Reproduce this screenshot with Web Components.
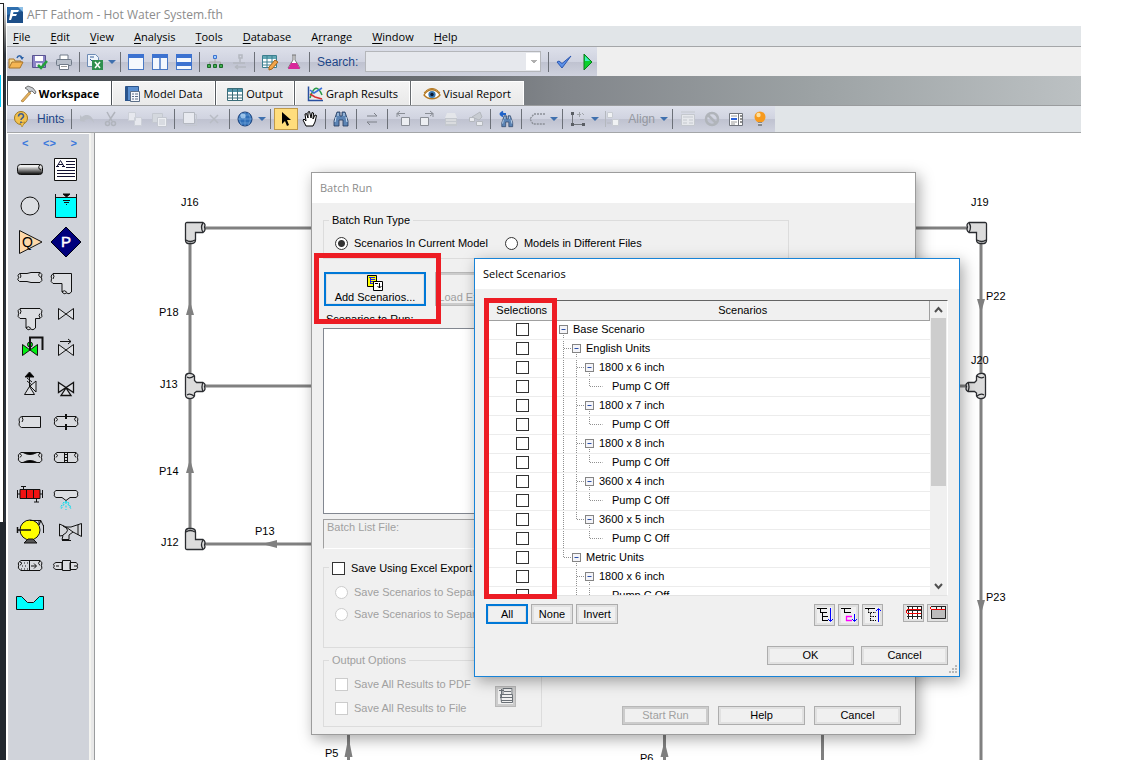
<!DOCTYPE html>
<html lang="en">
<head>
<meta charset="utf-8">
<title>AFT Fathom - Hot Water System.fth</title>
<style>
html, body { margin: 0; height: 100%; background: #fff; overflow: hidden; }
body { font: 11px/13px "Liberation Sans", Arial, sans-serif; color: #000; }
</style>
</head>
<body>
<app-shell></app-shell>
<script>
function define(name, css, html, setup) {
  const t = document.createElement('template');
  t.innerHTML = '<style>*{box-sizing:border-box}' + css + '</style>' + html;
  customElements.define(name, class extends HTMLElement {
    constructor() {
      super();
      this.attachShadow({ mode: 'open' }).append(t.content.cloneNode(true));
    }
    connectedCallback() {
      if (setup && !this.ready) { this.ready = true; setup(this, this.shadowRoot); }
    }
  });
}

/* ---------- 16px toolbar icons ---------- */
const win = '<rect x=".5" y=".5" width="15" height="15" fill="#f4f8fd" stroke="#4a79c4"/><path d="M0 0h16v4H0z" fill="#3c72d0"/>';
const binoc = c => `<path d="M4 1h3v4h2V1h3l3 9v5h-5V9H6v6H1v-5z" fill="${c}" stroke="#23395a" stroke-width=".8"/><path d="M3 6l-1 5M13 6l1 5M5 2v3M11 2v3" stroke="#cfe3f7" fill="none"/>`;
const ICONS = {
  logo: '<path d="M0 0h16v16H0z" fill="#2f6fae"/><path d="M0 8l16-4v12H0z" fill="#1c4e88"/><path d="M11 0h5v5z" fill="#8fc0e6"/><path d="M4 3h8l-1 2H6.500L6 7h4l-1 2H5.500L4 13H2z" fill="#fff"/>',
  open: '<path d="M1 14V5h5l1 2h6v2" fill="#f9d98a" stroke="#a8742a"/><path d="M1 14l3-6h11l-3 6z" fill="#f5b552" stroke="#a8742a"/><path d="M9 4c1-3 4-3 5 0" fill="none" stroke="#2d62a8" stroke-width="1.500"/><path d="M12 3h4l-2 3z" fill="#2d62a8"/>',
  save: '<path d="M.5 1.500h13v12H.5z" fill="#8b84c6" stroke="#5a5492"/><path d="M3 2h8v5H3z" fill="#fff"/><path d="M4 9h6v4H4z" fill="#e4e4f2"/><path d="M6 11l3 3 6-7" fill="none" stroke="#23a03a" stroke-width="2.500"/>',
  print: '<path d="M4 1h8v5H4z" fill="#fff" stroke="#707a88"/><rect x=".5" y="5.500" width="15" height="6" rx="1" fill="#b9c0cb" stroke="#707a88"/><path d="M3.500 10.500h9v5h-9z" fill="#fff" stroke="#707a88"/><path d="M5 12.500h6" stroke="#999"/>',
  excel: '<path d="M.5.500h8l3 3v9H.5z" fill="#eef4fb" stroke="#6d8bb5"/><path d="M3 3h4M3 5l3 3" stroke="#335a96" fill="none"/><path d="M5 6h11v10H5z" fill="#2f8f4e"/><path d="M8 8l5 6M13 8l-5 6" stroke="#fff" stroke-width="1.500"/>',
  win1: win, win2: win + '<path d="M8 3v13" stroke="#4a79c4" stroke-width="1.500"/>',
  win3: win + '<path d="M0 8h16v4H0z" fill="#3c72d0"/>',
  tree: '<path d="M8 4v4M2.500 11V8h11v3M8 8v3" fill="none" stroke="#aaa"/><path d="M6.500 1.500h3v3h-3z" fill="#9fd0ff" stroke="#3c72d0"/><path d="M.5 10.500h3v3h-3zM6.500 10.500h3v3h-3zM12.500 10.500h3v3h-3z" fill="#3fae4e" stroke="#1d6b2b"/>',
  treeoff: '<path d="M8 1h3v3H8zM9 4v4M2 9h12M4 13h11M4 13l3-2M4 13l3 2" fill="none" stroke="#b4b8c0" stroke-width="1.500"/>',
  gridpen: '<path d="M.5 1.500h14v12H.5z" fill="#fff" stroke="#3b7f8f"/><path d="M1 2h13v3H1z" fill="#63a8b5"/><path d="M1 8h13M1 11h13M5 2v11M10 2v11" stroke="#3b7f8f"/><path d="M7 13l6-7 3 2-6 7-3 1z" fill="#f3a64a" stroke="#a8651c"/>',
  flask: '<path d="M6 1h4M7 1v5l-5 8h12L9 6V1" fill="#fff" stroke="#777"/><path d="M5 9h6l3 6H2z" fill="#d8289a"/>',
  check: '<path d="M1 8l5 6L15 2 6 9.500 3 7z" fill="#5b90e8" stroke="#2c57b0"/>',
  play: '<path d="M4 0l8 8-8 8z" fill="#0ad02c" stroke="#0a7d1c"/><path d="M5 2l5 5H5z" fill="#3df0c0"/>',
  hammer: '<path d="M9 6l-8 9 2 1 8-9z" fill="#e6b25c" stroke="#a4762e" stroke-width=".7"/><path d="M5 2l3-2 5 2 3 4-1 2-3-3-3 1-1-2z" fill="#c8ccd0" stroke="#555" stroke-width=".8"/>',
  book: '<path d="M1.500.500h13v14h-13z" fill="#5a8fd0" stroke="#2a548c"/><path d="M1 1h3v14H1z" fill="#2a548c"/><path d="M6.500 5.500h9v10h-9z" fill="#f4f6fa" stroke="#5c6f88"/><path d="M8 8h2M11 8h3M8 10.500h2M11 10.500h3M8 13h2M11 13h3" stroke="#5c6f88"/>',
  sheet: '<path d="M.5 2.500h15v12H.5z" fill="#fff" stroke="#3b6c78"/><path d="M1 3h14v3H1z" fill="#4f93a8"/><path d="M1 9h14M1 12h14M5.500 3v11M10.500 3v11" stroke="#3b6c78"/>',
  graph: '<path d="M1.500.500v14H16" fill="none" stroke="#2850a0" stroke-width="1.500"/><path d="M3 12c4-13 8-12 12-3" fill="none" stroke="#2a9a48" stroke-width="1.500"/><path d="M3 4l4 3 8-5" fill="none" stroke="#3a70d8" stroke-width="1.500"/><path d="M3 8l5 3 7 2" fill="none" stroke="#d83030" stroke-width="1.500"/>',
  eye: '<path d="M0 9c4-7 12-7 16 0-4 5-12 5-16 0z" fill="#fff" stroke="#b47820" stroke-width="1.300"/><path d="M0 7c4-6 12-6 16 0" fill="none" stroke="#b47820"/><circle cx="8" cy="8.500" r="3.600" fill="#3a78b0"/><circle cx="8" cy="8.500" r="1.700" fill="#0a1830"/>',
  hint: '<circle cx="8" cy="7" r="6.500" fill="#f3c24e" stroke="#a07820"/><path d="M7 12l2 4 3-5z" fill="#f3c24e" stroke="#a07820" stroke-width=".6"/><path d="M5.500 5.500c0-4 5.500-3.500 5 0-.5 1.800-2.500 1.500-2.500 3.500M8 10.500v1.500" fill="none" stroke="#3c5c92" stroke-width="1.600"/>',
  undo: '<path d="M1 10V4l2 2c4-4 11-2 12 6-3-5-7-5-10-2l2 1z" fill="#bcc0c8"/>',
  cut: '<path d="M4 1l5 9M12 1L6 10" stroke="#b0b4bc" stroke-width="1.500"/><circle cx="4.500" cy="12.500" r="2" fill="none" stroke="#b0b4bc" stroke-width="1.500"/><circle cx="10.500" cy="12.500" r="2" fill="none" stroke="#b0b4bc" stroke-width="1.500"/>',
  copy: '<path d="M1.500 1.500h7v8h-7zM7.500 6.500h7v8h-7z" fill="#e6e8ee" stroke="#ccd0d8"/>',
  paste: '<path d="M1.500 2.500h10v9h-10z" fill="#d4d8de" stroke="#c4c8d0"/><path d="M6.500 6.500h9v9h-9z" fill="#eceef2" stroke="#c4c8d0"/><path d="M8 9h6M8 11h6M8 13h6" stroke="#c4c8d0"/>',
  box: '<path d="M3.500 3.500h11v11h-11z" fill="none" stroke="#c4c8d0"/><path d="M1.500 1.500h11v11h-11z" fill="#e8eaf0" stroke="#b4b8c0"/>',
  cross: '<path d="M4 4l8 8M12 4l-8 8" stroke="#b8bcc4" stroke-width="1.500"/>',
  globe: '<circle cx="8" cy="8" r="7" fill="#2f6fb8" stroke="#1a3f78"/><path d="M1 8h14M8 1v14M3 4h10M3 12h10M5 2c-3 4-3 8 0 12M11 2c3 4 3 8 0 12" fill="none" stroke="#7cacdc" stroke-width=".6"/><circle cx="6" cy="5" r="2.500" fill="#bfe0fa" opacity=".7"/>',
  arrow: '<path d="M4 1v12l3-3 2 5 2-1-2-5h4z" fill="#000"/>',
  hand: '<path d="M4 15l-3-6 1-1 2 2-1-7 1.500-.5L6 7V1l1.500-.5L9 7l1-5.500 1.500.5-.5 6 2-4 1.500.500L13 11l-2 4z" fill="#fff" stroke="#000"/>',
  binoc: binoc('#5c84b4'),
  swap: '<path d="M3 5h10l-3-3M13 11H3l3 3" fill="none" stroke="#7c8088"/>',
  rotl: '<path d="M6.500 6.500h8v8h-8z" fill="#eceef2" stroke="#8a8e96"/><path d="M10 2.500H2M2 2.500l3-2.500M2 2.500l3 2.500M2 2v4" fill="none" stroke="#8a8e96"/>',
  rotr: '<path d="M1.500 6.500h8v8h-8z" fill="#eceef2" stroke="#8a8e96"/><path d="M6 2.500h8M14 2.500L11 0M14 2.500L11 5M14 2v4" fill="none" stroke="#8a8e96"/>',
  db: '<path d="M2 7h12v8H2z" fill="#c4c8ce"/><path d="M4 2h8l2 5H2z" fill="#e4e6ea"/><path d="M3 9h10M3 12h10" stroke="#eee"/>',
  route: '<path d="M2.500 6.500h5v4h-5zM9.500 10.500h6v4h-6z" fill="#e8eaee" stroke="#b4b8be"/><path d="M5 6l8-5 2 5-3 3z" fill="#c8ccd2" stroke="#b4b8be"/>',
  findback: '<g transform="translate(3 4) scale(.78)">' + binoc('#5c84b4') + '</g><path d="M8 3H2M2 3l3-2.500M2 3l3 2.500" stroke="#1f62c8" stroke-width="1.800" fill="none"/>',
  lasso: '<path d="M16 3H5l-4 5 3 5h12" fill="none" stroke="#8a8e96" stroke-width="1.300" stroke-dasharray="2 1"/>',
  nodes: '<path d="M2.500 2v11.500H14" fill="none" stroke="#74787e"/><path d="M1 1h3v3H1zM1 12h3v3H1zM12 12h3v3h-3z" fill="#5a5e64"/><path d="M7 3.500h4M9.500 1v5M12 2l2 2M10 8.500h4" stroke="#a0a4aa"/>',
  align: '<path d="M1.500 0v16" stroke="#b4b8be"/><path d="M3.500 1.500h5v5h-5zM8.500 8.500h6v6h-6z" fill="#f0f2f4" stroke="#c8ccd2"/><path d="M3 12h4" stroke="#b4b8be"/>',
  panel: '<path d="M1.500 3.500h13v11h-13z" fill="#e6e8ec" stroke="#c4c8ce"/><path d="M3 6h10M3 9h4M9 9h4M3 12h4M9 12h4M1 1h14" stroke="#c4c8ce"/>',
  noentry: '<circle cx="8" cy="8" r="6" fill="none" stroke="#b0b4ba" stroke-width="2.500"/><path d="M4 4l8 8" stroke="#b0b4ba" stroke-width="2.500"/>',
  list: '<path d="M1.500 2.500h13v12h-13z" fill="#fff" stroke="#70747c"/><path d="M10.500 3v11" stroke="#70747c"/><path d="M3 5h6M3 11h6M3 13h4" stroke="#999"/><path d="M3 8h6" stroke="#2c62d8" stroke-width="2"/><path d="M12 5h2M12 8h2M12 11h2" stroke="#222"/>',
  bulb: '<circle cx="8" cy="6" r="5.500" fill="#f79a1e"/><circle cx="6.500" cy="4" r="2.200" fill="#fde0a0"/><path d="M6 11h4v4H6z" fill="#888"/><path d="M6 12.500h4" stroke="#ddd"/>',
  scen: '<path d="M.5.500h9v11h-9z" fill="#ff0" stroke="#000"/><path d="M2 2.500h6M4 4.500h4M4 6.500h4M4 8.500h4M3.500 2v7" stroke="#22d" fill="none"/><path d="M6.500 6.500h9v9h-9z" fill="#fff" stroke="#000"/><path d="M12.500 8v5M10.500 11l2 2 2-2M8 8.500h3" stroke="#000" fill="none"/>',
  printer: '<path d="M5 .500h9v6H5zM1 2.500h5M3.500 1v9M2.500 6.500h12v8h-11zM2 9.500h12M3 12.500h11M6 3.500h7" fill="none" stroke="#6a7076"/>',
  exp1: '<path d="M0 1.500h10M3.500 2v4M3 5.500h7M5.500 6v8M5 9.500h6M5 13.500h6" fill="none" stroke="#000"/><path d="M13.500 1v13M11 12l2.500 2.500L16 12" fill="none" stroke="#00f"/>',
  exp2: '<path d="M0 1.500h10M3.500 2v4M3 5.500h7" fill="none" stroke="#000"/><path d="M5 9.500h6M5 13.500h6M5.500 9v5" fill="none" stroke="#f0f" stroke-width="1.300"/><path d="M13.500 7v7M11 12l2.500 2.500L16 12" fill="none" stroke="#00f"/>',
  exp3: '<path d="M0 1.500h10" stroke="#000"/><path d="M3.500 2v3M3 5.500h8M5.500 6v8M5 9.500h6M5 13.500h6" fill="none" stroke="#000" stroke-dasharray="1.500 1"/><path d="M13.500 15V2M11 4l2.500-2.500L16 4" fill="none" stroke="#00f"/>',
  gridall: '<path d="M2 2h13v12H2z" fill="#fff"/><path d="M1 1.500h15M1 5.500h15M1 8.500h15M1 11.500h15M2.500 1v13M6.500 1v13M11.500 1v13M15.500 1v13" stroke="#222" fill="none"/><path d="M1 4.500h14M1 8.500h14M.5 5v3" stroke="#e00"/>',
  gridtop: '<path d="M1.500 4.500h14v9h-14z" fill="#bcbcbc" stroke="#222"/><path d="M1 1.500h15M6.500 1v4M11.500 1v4M15.500 1v4" stroke="#222"/><path d="M1 4.500h14M.5 2v2" stroke="#e00"/>'
};
define('ui-icon', ':host{display:inline-flex;flex:none;width:16px;height:16px}svg{width:16px;height:16px;overflow:visible}',
  '<svg viewBox="0 0 16 16" aria-hidden="true"></svg>',
  (el, r) => { r.querySelector('svg').innerHTML = ICONS[el.getAttribute('name')]; });

define('tool-button', `:host{display:flex;flex:none}
button{all:unset;display:flex;align-items:center;justify-content:center;width:16px;height:20px}
:host([active]){margin:0 -4px}
:host([active]) button{width:22px;border:1px solid #c09a4a;background:#ffdd7c}`,
  '<button type="button"><ui-icon></ui-icon></button>',
  (el, r) => {
    const i = document.createElement('ui-icon'); i.setAttribute('name', el.getAttribute('name'));
    r.querySelector('ui-icon').replaceWith(i);
    r.querySelector('button').setAttribute('aria-label', el.getAttribute('name'));
  });
define('tool-sep', ':host{display:block;flex:none;width:1px;height:20px;margin:0 -1px;background:#6c7078}', '');
define('tool-caret', ':host{display:block;flex:none;margin:0 -3px;border:4px solid transparent;border-top-color:#3f70ae;border-bottom:0}', '');
define('tool-strip', `:host{display:flex;align-items:center;align-self:flex-start;gap:8px;padding:0 1px;height:29px;color:#1c4587;
font:11px/16px "Liberation Sans",sans-serif;background:linear-gradient(#dde0ea,#d0d3e0 50%,#bfc2d0 52%,#cfd2de)}`, '<slot></slot>');
define('search-box', `:host{display:flex;align-items:center;gap:7px}
label{display:block;font-size:12px}select{appearance:none;width:176px;height:21px;border:1px solid #b4b6ba;border-radius:0;margin:0;
background:linear-gradient(#b0b0b0,#b0b0b0) no-repeat 165px 8px/6px 1px,linear-gradient(#b0b0b0,#b0b0b0) no-repeat 166px 9px/4px 1px,linear-gradient(#b0b0b0,#b0b0b0) no-repeat 167px 10px/2px 1px,linear-gradient(#fff,#fff) no-repeat 160px 1px/14px 17px,#e6e8ed}`,
  '<label for="q">Search:</label><select id="q"></select>');

define('menu-bar', `:host{display:flex;gap:20px;padding:0 6px;height:21px;background:#e1e5e8;border-bottom:1px solid #a4a6a8}
a{font:11px/21px "Open Sans",sans-serif;color:#000;text-decoration:none}u{text-underline-offset:2px}`,
  ['<u>F</u>ile', '<u>E</u>dit', '<u>V</u>iew', '<u>A</u>nalysis', '<u>T</u>ools', '<u>D</u>atabase', 'A<u>r</u>range', '<u>W</u>indow', '<u>H</u>elp']
    .map(m => `<a href="#">${m}</a>`).join(''));

define('title-bar', ':host{display:flex;align-items:center;gap:4px;height:26px;padding-top:3px;color:#8c8c8c;font:12px/16px "Open Sans",sans-serif}',
  '<ui-icon name="logo"></ui-icon><slot></slot>');

define('tab-item', `:host{display:block;flex:none;height:24px}
button{all:unset;display:flex;align-items:center;justify-content:center;gap:3px;width:100%;height:100%;background:linear-gradient(#f4f4f4,#e9e9e9);
border:1px solid #fff;border-bottom:0;box-sizing:border-box;font:11px/16px "Open Sans",sans-serif;white-space:nowrap}
:host([selected]) button{background:#fff;font-weight:700}`, '<button type="button" role="tab"><slot></slot></button>');
define('tab-strip', `:host{display:flex;align-items:flex-end;gap:1px;height:30px;padding-left:1px;border-bottom:1px solid #9a9c9e;
background:linear-gradient(90deg,#43484e,#6a6e72 40%,#82868b 52%,#9ca2a4 75%,#bcc1c3)}
.a{width:103px}.b{width:103px}.c{width:78px}.d{width:115px}.e{width:113px}`,
  `<tab-item class="a" selected><ui-icon name="hammer"></ui-icon>Workspace</tab-item><tab-item class="b"><ui-icon name="book"></ui-icon>Model Data</tab-item><tab-item class="c"><ui-icon name="sheet"></ui-icon>Output</tab-item><tab-item class="d"><ui-icon name="graph"></ui-icon>Graph Results</tab-item><tab-item class="e"><ui-icon name="eye"></ui-icon>Visual Report</tab-item>`);

/* ---------- 36px palette symbols ---------- */
const tube = (x1, x2, y1 = 12.5, y2 = 22.5) => { const m = (y1 + y2) / 2;
  return `<path d="M${x1 + 3} ${y1}H${x2 - 2}Q${x2 + 1} ${y1 + 2} ${x2 - .5} ${m}Q${x2 + 1} ${y2 - 2} ${x2 - 2} ${y2}H${x1 + 3}Q${x1 - 1} ${y2 - 2} ${x1 + .5} ${m}Q${x1 - 1} ${y1 + 2} ${x1 + 3} ${y1}z" fill="#d8dade"/><path d="M${x1 + 2} ${y1 + 1}q3 2 0 4M${x2 - 2} ${y1}q-3 3 0 5" fill="none"/>`; };
const bow = '<path d="M10.500 12.500v11l15-11v11z"';
const PAL = [
  '<defs><linearGradient id="g" x2="0" y2="1"><stop offset=".2" stop-color="#eee"/><stop offset=".9" stop-color="#222"/></linearGradient></defs><rect x="5.500" y="12.500" width="25" height="10" rx="3" fill="url(#g)"/><path d="M28 12.500q-3 4 1 5.500" fill="none"/>',
  '<path d="M6.500 6.500h22v22h-22z" fill="#fff"/><g stroke="#113"><path d="M18 9.500h9M18 12.500h9M18 15.500h9M9 18.500h18M9 21.500h18M9 24.500h18"/><path d="M9 14.500l3.500-6 3.500 6M8 14.500h3M14 14.500h3M10 12.500h5" fill="none"/></g>',
  '<circle cx="18" cy="18" r="9" fill="#dcdee2"/>',
  '<path d="M7.500 9.500h21v20h-21z" fill="#0ff"/><path d="M7.500 6v4M28.500 6v4M15 12.500h7M16 14.500h5M18 16.500h1" fill="none"/><path d="M15 6h7l-3.500 3z" fill="#000"/>',
  '<path d="M7.500 6.500v23L30 18z" fill="#ffd8a8"/><text x="10" y="23" font-size="14" fill="#000" stroke="none">Q</text>',
  '<path d="M18 3l15 15-15 15L3 18z" fill="#00007c" stroke="#001"/><text x="13" y="23" font-size="15" fill="#fff" stroke="#fff" stroke-width=".5">P</text>',
  '<path d="M7.500 13.500H15L19 12.500H28Q31 14 29.500 17.500Q31 21 28 22.500H19L15 21.500H7.500Q4.500 20 6.500 17.500Q5 15 7.500 13.500z" fill="#dcdee2"/><path d="M8 14q2 2 0 4M28 12.500q-3 3 1 5" fill="none"/>',
  '<path d="M5 13.500H23.500V32Q21 35 18.500 33Q16 35 14 32V23.500H5Q2 22 3.500 18.500Q2 16 5 13.500z" fill="#dcdee2"/><path d="M5 14q2 2 0 5M14 31.500q3-2 5 1" fill="none"/>',
  '<path d="M8 12.500H28Q31 14 29.500 17.500Q31 21 28 22.500H23.500V32Q21 35 18.500 33Q16 35 14 32V22.500H8Q5 21 6.500 17.500Q5 14 8 12.500z" fill="#dcdee2"/><path d="M8 13q2 2 0 5M28 22q-2-3 0-4.500M14 31.500q3-2 5 1" fill="none"/>',
  bow + ' fill="#dcdee2"/>',
  bow + ' fill="#0e1"/><circle cx="18" cy="12.500" r="2.500" fill="#0e1"/><path d="M18 18V5.500h12.500V18" fill="none" stroke-width="2"/>',
  bow + ' fill="#dcdee2"/><path d="M12 9.500h11M20 7l3 2.500-3 2.500" fill="none"/>',
  '<path d="M12.500 26.500l5-8 5 8zM18 18l6-5v11z" fill="#dcdee2"/><path d="M17.500 19V6M15 13l5 4M15 10l5 4" fill="none"/><path d="M13 9l4.500-5L22 9z" fill="#000"/>',
  '<path d="M10.500 14.500v10l15-10v10zM18 20l-5 7.500h10z" fill="#dcdee2" stroke-width="1.300"/>',
  '<path d="M9.500 12.500H28.500V23.500H9.500Q6 22 7.500 18Q6 14 9.500 12.500z" fill="#dcdee2"/><path d="M10 13q2 3 0 5" fill="none"/>',
  tube(6, 30) + '<path d="M18 10v5M18 20v6" stroke-width="2"/>',
  tube(6, 30) + '<path d="M11 12.500q7 4 14 0zM11 22.500q7-4 14 0z" fill="#000"/>',
  tube(6, 30) + '<path d="M16.500 12v11M19.500 12v11M17 14.500h3M17 17.500h3M17 20.500h3" fill="none"/>',
  '<path d="M8 13.500h20v9H8z" fill="#f11212"/><path d="M14.500 14v9M21.500 14v9M5.500 14v8M30.500 14v8M6 18h2M28 18h2M11.500 10v3M9 10.500h5M24.500 23v3M22 26h5" fill="none"/>',
  '<path d="M8 14.500H28Q31 16 29.500 18Q31 20 28 21.500H22L18 24.500 14 21.500H8Q5 20 6.500 18Q5 16 8 14.500z" fill="#dcdee2"/><path d="M18 25l-5 8M18 25l5 8M18 26v8M16 26l-4 6M20 26l3 6" stroke="#0de" stroke-dasharray="2 1.500"/>',
  '<circle cx="18" cy="18" r="10" fill="#ff0"/><path d="M12 31h13l-4-4h-5z" fill="#555"/><path d="M5.500 15v6M6 18h13" stroke-width="1.500"/><path d="M18 8.500h11L27 13V9M31.500 13v8M29 9l2.500 5" fill="none"/>',
  '<path d="M11.500 12L18 15H23L33.500 11.500V24.500L25 20 21 23V27.500H14L15 23.500 11.500 24z" fill="#d4d6da"/><path d="M14 28.500h9M30 13v10M15 14q9 4 0 9M18 15l7 5" fill="none"/>',
  tube(6, 30) + '<path d="M17.500 12v11M19 18h5M22 15.500l2.500 2.500-2.500 2.500M9 15h1M12 15h1M15 15h1M10 18h1M13 18h1M9 21h1M12 21h1M15 21h1" fill="none"/>',
  '<path d="M8 14.500h6v7H8Q4 20 6.500 18Q4 16 8 14.500zM22 14.500h6Q31 16 29 18Q31 20 28 21.500h-6zM14.500 12.500h8v10h-8z" fill="#dcdee2"/><path d="M8 18h3M26 18h3" fill="none"/>',
  '<path d="M4.500 12.500h5l6 6h6l6-6h4v13h-27z" fill="#0ff"/>'
];
define('pipe-palette', `:host{display:block;flex:none;width:84px;background:#d0d3da;border-left:1px solid #fff;border-top:1px solid #fff;border-right:2px solid #f4f4f0}
nav{display:flex;justify-content:space-between;padding:0 12px 0 14px;height:18px;font:bold 11px/18px "Liberation Sans",sans-serif;color:#3a78dc}
div{display:grid;grid-template-columns:36px 36px;grid-auto-rows:36px;padding-left:4px}
button{all:unset;width:36px;height:36px}svg{display:block;width:36px;height:36px}text{font-family:"Liberation Sans",sans-serif}`,
  '<nav><span>&lt;</span><span>&lt;&gt;</span><span>&gt;</span></nav><div>' + PAL.map(p => `<button type="button"><svg viewBox="0 0 36 36" stroke="#111" stroke-width="1">${p}</svg></button>`).join('') + '</div>');

/* ---------- pipe network ---------- */
const elbow = '<path d="M2 .500H18Q21 2 19.500 5Q21 8.500 18 10.500H10.500V18Q10.500 21 7 21.500H3Q.5 21 .5 18V2Q.5.500 2 .500z"/><path d="M18 1q-3 4 0 9M1 18q4 3 9 0" fill="none"/>';
const tee = '<path d="M3 .500Q8 0 9.500 3V7.500L11.500 9.500H18Q21 11 19.500 13.500Q21 17 18 18.500H11.500L9.500 20V23Q8 26 4 25.500Q.5 25 .5 22V4Q.5 1 3 .500z"/><path d="M18 9.500q-2 4 0 9M2 4q3 2 7-1M2 22q3-2 7 1" fill="none"/>';
define('pipe-canvas', `:host{display:block;position:relative;flex:1;min-width:0;background:#fff;border-left:1px solid #9a9c9e;overflow:hidden}
svg{position:absolute;left:0;top:0;width:1000px;height:100%;font:11px "Liberation Sans",sans-serif}
.j{fill:#dcdcdc;stroke:#2a2c30;stroke-width:1.300}`,
  `<svg><g transform="translate(-95 -133)">
  <path d="M200 228H975M190 240V545M200 386H975M200 544H320M981 240V760M348.500 730V760M664.500 730V760M822.500 730V760" fill="none" stroke="#808080" stroke-width="3"/>
  <path d="M190 301l4 14h-8zM190 459l4 14h-8zM262 544l15-4v8zM981 313l4-14h-8zM981 614l4-14h-8zM348.500 737l4 20h-8zM664.500 741l4 16h-8z" fill="#808080"/>
  <g class="j"><g transform="translate(185 222)">${elbow}</g><g transform="translate(185 373)">${tee}</g><g transform="translate(185 550) scale(1 -1)">${elbow}</g>
  <g transform="translate(987 222) scale(-1 1)">${elbow}</g><g transform="translate(986 373) scale(-1 1)">${tee}</g></g>
  <text x="181" y="206">J16</text><text x="159" y="316">P18</text><text x="160" y="388">J13</text><text x="159" y="475">P14</text><text x="161" y="546">J12</text><text x="255" y="535">P13</text>
  <text x="971" y="206">J19</text><text x="986" y="300">P22</text><text x="971" y="364">J20</text><text x="986" y="601">P23</text><text x="325" y="757">P5</text><text x="640" y="762">P6</text>
  </g></svg><slot></slot>`);

/* ---------- dialog parts ---------- */
define('dialog-window', `:host{display:flex;flex-direction:column;position:absolute;background:#f0f0f0;border:1px solid #9c9c9c;box-shadow:3px 4px 14px rgba(0,0,0,.35);color:#000}
header{flex:none;height:30px;padding-left:8px;background:#fff;font:11px/30px "Open Sans",sans-serif;color:#8c8c8c}
:host([active]){border-color:#1883d7}:host([active]) header{color:#000}`,
  '<header></header><slot></slot>', (el, r) => { r.querySelector('header').textContent = el.getAttribute('heading'); });
define('push-button', `:host{display:block;flex:none;width:87px;height:19px}
button{all:unset;box-sizing:border-box;display:flex;flex-direction:column;align-items:center;justify-content:center;width:100%;height:100%;
background:#f0f0f0;border:1px solid #adadad;box-shadow:inset 0 0 0 2px #e1e1e1;white-space:nowrap;overflow:hidden}
:host([focused]) button{border:2px solid #0078d7;box-shadow:inset 0 0 0 1px #e1e1e1}
button:disabled{color:#a0a0a0;border-color:#b8b8b8;box-shadow:inset 0 0 0 2px #ccc}`,
  '<button type="button"><slot></slot></button>', (el, r) => { r.querySelector('button').disabled = el.hasAttribute('disabled'); });
define('field-option', `:host{display:block}
label{display:flex;align-items:center;gap:6px;height:14px;white-space:nowrap}
input{appearance:none;flex:none;margin:0;width:13px;height:13px;border:1px solid #333;background:#fff}
input[type=radio]{border-radius:50%}input:checked{background:radial-gradient(#333 0 3px,#fff 4px)}
input:disabled{border-color:#ccc}label:has(:disabled){color:#a0a0a0}`,
  '<label><input><slot></slot></label>', (el, r) => {
    const i = r.querySelector('input'); i.type = el.getAttribute('type'); i.name = el.getAttribute('group') || 'opt';
    i.checked = el.hasAttribute('checked'); i.disabled = el.hasAttribute('disabled');
  });
define('group-box', `:host{display:block}fieldset{height:100%;margin:0;min-width:0;border:1px solid #dcdcdc;padding:0 5px}
legend{padding:0 3px;height:13px}:host([muted]) legend{color:#a0a0a0}`,
  '<fieldset><legend><slot name="legend"></slot></legend><slot></slot></fieldset>');

define('batch-dialog', `:host{display:contents}
dialog-window{left:216px;top:39px;width:605px;height:563px}
main{padding:11px 14px 0 11px}
.type{width:466px;height:45px}.radios{display:flex;gap:17px;padding:9px 6px 0}
.row{display:flex;gap:9px;margin:13px 0 0 1px}.row push-button{width:102px;height:34px}
.cap{padding:7px 0 2px 3px}.list{width:467px;height:186px;background:#fff;border:1px solid #828790}
.file{width:467px;height:30px;margin-top:5px;padding:1px 3px;border:1px solid #a0a0a0;border-right-color:#fff;border-bottom-color:#fff;color:#a0a0a0}
.excel{width:467px;height:87px;margin-top:12px}.excel .o{display:grid;gap:8px;padding:11px 6px}
.end{display:flex;align-items:flex-end;gap:9px;margin-top:6px}.out{width:219px;height:73px;margin-right:auto}
.oo{display:flex;justify-content:space-between;align-items:center;padding:10px 20px 0 6px}.oo div{display:grid;gap:10px}
.oo push-button{width:21px;height:21px}
.end>push-button{margin-bottom:2px}
.mark{position:absolute;left:2px;top:80px;width:127px;height:71px;border:5px solid #ed1c24}`,
  `<dialog-window heading="Batch Run"><main>
  <group-box class="type"><span slot="legend">Batch Run Type</span><div class="radios"><field-option type="radio" checked>Scenarios In Current Model</field-option><field-option type="radio">Models in Different Files</field-option></div></group-box>
  <div class="row"><push-button focused><ui-icon name="scen"></ui-icon>Add Scenarios...</push-button><push-button disabled><ui-icon name="list"></ui-icon>Load Existing List...</push-button></div>
  <div class="cap">Scenarios to Run:</div><div class="list"></div><div class="file">Batch List File:</div>
  <group-box class="excel"><field-option slot="legend" type="checkbox">Save Using Excel Export Manager</field-option><div class="o"><field-option type="radio" disabled>Save Scenarios to Separate</field-option><field-option type="radio" disabled>Save Scenarios to Separate</field-option></div></group-box>
  <div class="end"><group-box class="out" muted><span slot="legend">Output Options</span><div class="oo"><div><field-option type="checkbox" disabled>Save All Results to PDF</field-option><field-option type="checkbox" disabled>Save All Results to File</field-option></div><push-button disabled><ui-icon name="printer"></ui-icon></push-button></div></group-box>
  <push-button disabled>Start Run</push-button><push-button>Help</push-button><push-button>Cancel</push-button></div>
  </main><div class="mark"></div></dialog-window>`);

/* Each row: [level, label, columns whose guide continues below this row] */
const ROWS = [[0, 'Base Scenario', []], [1, 'English Units', [0]]];
['1800 x 6 inch', '1800 x 7 inch', '1800 x 8 inch', '3600 x 4 inch', '3600 x 5 inch'].forEach((n, i) => {
  const g = i < 4 ? [0, 1] : [0]; ROWS.push([2, n, g], [3, 'Pump C Off', g]);
});
ROWS.push([1, 'Metric Units', []], [2, '1800 x 6 inch', [1]], [3, 'Pump C Off', [1]]);
function guides([level, , cont]) {
  const X = c => 4.5 + 13 * c; let d = '';
  cont.forEach(c => d += `M${X(c)} 0V19`);
  if (level) d += `M${X(level - 1)} 0V9.500H${X(level)}`;
  let s = '';
  if (level < 3) {
    d += `M${X(level)} 9V19`;
    s = `<rect x="${X(level) - 4}" y="5.500" width="8" height="8" fill="#f4f4f8" stroke="#848484"/><path d="M${X(level) - 2} 9.500h4" stroke="#2c50a8"/>`;
  }
  return `<svg width="${(level + 1) * 13 + 1}" height="19"><path d="${d}" fill="none" stroke="#909090" stroke-dasharray="1 1"/>${s}</svg>`;
}
define('scenario-grid', `:host{display:flex;height:296px;border:1px solid #646464;border-right-color:#fff;border-bottom-color:#e3e3e3;background:#fff;overflow:hidden}
table{flex:1;border-collapse:collapse;table-layout:fixed;align-self:flex-start}
th{height:19px;padding:0;font-weight:400;background:#f0f0f0;border-right:1px solid #a0a0a0;border-bottom:1px solid #a0a0a0}
td{height:19px;padding:0;border-bottom:1px solid #ececec}.s{width:68px;text-align:center}
input{appearance:none;display:block;margin:0 auto;width:13px;height:13px;border:1px solid #333;background:#fff}
.n{display:flex;align-items:center;height:18px;padding-left:3px;overflow:hidden}svg{flex:none}
aside{flex:none;display:flex;flex-direction:column;justify-content:space-between;width:17px;background:#f0f0f0}
aside svg{width:17px;height:17px}i{display:block;height:168px;margin:0 1px auto;background:#cdcdcd}`,
  `<table><thead><tr><th class="s">Selections</th><th>Scenarios</th></tr></thead><tbody>${ROWS.map(r => `<tr><td class="s"><input type="checkbox" aria-label="${r[1]}"></td><td><div class="n">${guides(r)}${r[1]}</div></td></tr>`).join('')}</tbody></table>
  <aside><svg><path d="M5 11l3.500-4 3.500 4" fill="none" stroke="#505050" stroke-width="2"/></svg><i></i><svg><path d="M5 6l3.500 4 3.500-4" fill="none" stroke="#505050" stroke-width="2"/></svg></aside>`);

define('select-dialog', `:host{display:contents}
dialog-window{left:379px;top:125px;width:486px;height:419px}
main{padding:11px 11px 0 11px}scenario-grid{margin-left:1px}
.row{display:flex;align-items:flex-start;gap:3px;margin-top:8px}.row push-button{width:42px;height:20px}
.row .i{width:21px;height:22px}.row .k{width:21px;height:18px}.first{margin-left:auto}.gap{margin-left:17px}
.ok{display:flex;justify-content:flex-end;gap:7px;margin-top:20px}
.mark{position:absolute;left:9px;top:39px;width:73px;height:301px;border:5px solid #ed1c24}
.grip{position:absolute;right:2px;bottom:3px}`,
  `<dialog-window heading="Select Scenarios" active><main><scenario-grid></scenario-grid>
  <div class="row"><push-button focused>All</push-button><push-button>None</push-button><push-button>Invert</push-button>
  <push-button class="i first"><ui-icon name="exp1"></ui-icon></push-button><push-button class="i"><ui-icon name="exp2"></ui-icon></push-button><push-button class="i"><ui-icon name="exp3"></ui-icon></push-button>
  <push-button class="k gap"><ui-icon name="gridall"></ui-icon></push-button><push-button class="k"><ui-icon name="gridtop"></ui-icon></push-button></div>
  <div class="ok"><push-button>OK</push-button><push-button>Cancel</push-button></div></main>
  <div class="mark"></div><svg class="grip" width="8" height="8"><path d="M6 0h2v2H6zM3 3h2v2H3zM6 3h2v2H6zM0 6h2v2H0zM3 6h2v2H3zM6 6h2v2H6z" fill="#b8b8b8"/></svg></dialog-window>`);

/* Sliver of the window that lies behind, left of the application */
define('desktop-edge', `:host{display:flex;flex:none;flex-direction:column;width:7px;padding-top:3px;background:#fff}
.a{height:519px;border-top:1px solid #222;border-right:1px solid #222;width:4px;background:linear-gradient(#00c8f8,#00c8f8) no-repeat 0 71px/1px 32px,#fff}
.b{flex:1;background:#20262e;width:6px}.w{display:flex}.c{width:2px;background:linear-gradient(#fff,#888 5%,#2c333c 10%)}`,
  '<div class="w"><div class="a"></div><div class="c"></div></div><div class="b"></div>');

const tb = s => s.split(' ').map(n => n === '|' ? '<tool-sep></tool-sep>' : n === 'v' ? '<tool-caret></tool-caret>' : `<tool-button name="${n}"${n === 'arrow' ? ' active' : ''}></tool-button>`).join('');
define('app-shell', `:host{display:flex;height:100vh}
.app{display:flex;flex-direction:column;flex:1;min-width:0;margin-right:65px}
.bar{background:#efefef}.bar2{background:#e1e5e8;border-bottom:1px solid #a4a6a8}.bar,.bar2{flex:none;display:flex}
.bar2 tool-strip{height:26px;padding:0 7px 0 6px}.work{display:flex;flex:1;min-height:0}
.split{flex:none;width:3px;background:#e8e8e8}.al{color:#9498a0}.h,.al{font-size:12px}`,
  `<desktop-edge></desktop-edge><div class="app"><title-bar>AFT Fathom - Hot Water System.fth</title-bar><menu-bar></menu-bar>
  <div class="bar"><tool-strip>${tb('open save print | excel v | win1 win2 win3 | tree treeoff | gridpen flask |')}<search-box></search-box>${tb('| check play')}</tool-strip></div>
  <tab-strip></tab-strip>
  <div class="bar2"><tool-strip>${tb('hint')}<span class="h">Hints</span>${tb('| undo cut copy paste | box cross | globe v | arrow hand | binoc | swap | rotl rotr db route | findback | lasso v | nodes v align')}<span class="al">Align</span>${tb('v | panel noentry list bulb')}</tool-strip></div>
  <div class="work"><pipe-palette></pipe-palette><div class="split"></div><pipe-canvas><batch-dialog></batch-dialog><select-dialog></select-dialog></pipe-canvas></div></div>`);
</script>
</body>
</html>
